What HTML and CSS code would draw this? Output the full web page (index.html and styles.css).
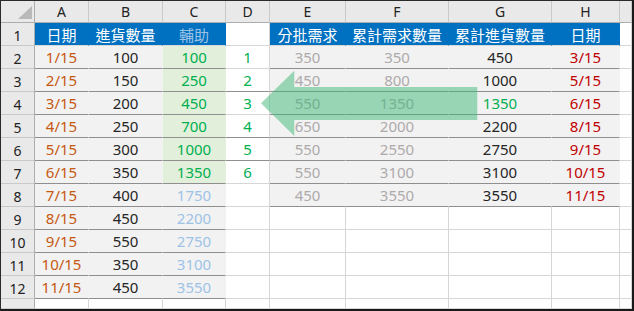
FILE: index.html
```html
<!DOCTYPE html>
<html lang="zh-Hant">
<head>
<meta charset="utf-8">
<title>Sheet</title>
<link rel="stylesheet" href="styles.css">
</head>
<body>
<div class="sheet">
  <div class="grid">
    <!-- column headers -->
    <div class="corner"><span class="tri"></span></div>
    <div class="ch">A</div><div class="ch">B</div><div class="ch">C</div><div class="ch">D</div>
    <div class="ch">E</div><div class="ch">F</div><div class="ch">G</div><div class="ch">H</div><div class="ch"></div>

    <!-- row 1 -->
    <div class="rh">1</div>
    <div class="c hd">日期</div><div class="c hd">進貨數量</div><div class="c hd hl">輔助</div>
    <div class="c"></div>
    <div class="c hd">分批需求</div><div class="c hd">累計需求數量</div><div class="c hd">累計進貨數量</div><div class="c hd">日期</div><div class="c"></div>

    <!-- row 2 -->
    <div class="rh">2</div>
    <div class="c t or">1/15</div><div class="c t bk">100</div><div class="c t g gr">100</div>
    <div class="c gr">1</div>
    <div class="c t gy">350</div><div class="c t gy">350</div><div class="c t bk">450</div><div class="c t rd">3/15</div><div class="c"></div>

    <!-- row 3 -->
    <div class="rh">3</div>
    <div class="c t or">2/15</div><div class="c t bk">150</div><div class="c t g gr">250</div>
    <div class="c dk gr">2</div>
    <div class="c t gy">450</div><div class="c t gy">800</div><div class="c t bk">1000</div><div class="c t rd">5/15</div><div class="c"></div>

    <!-- row 4 -->
    <div class="rh">4</div>
    <div class="c t or">3/15</div><div class="c t bk">200</div><div class="c t g gr">450</div>
    <div class="c gr">3</div>
    <div class="c t gy">550</div><div class="c t gy">1350</div><div class="c t gr">1350</div><div class="c t rd">6/15</div><div class="c"></div>

    <!-- row 5 -->
    <div class="rh">5</div>
    <div class="c t or">4/15</div><div class="c t bk">250</div><div class="c t g gr">700</div>
    <div class="c dk gr">4</div>
    <div class="c t gy">650</div><div class="c t gy">2000</div><div class="c t bk">2200</div><div class="c t rd">8/15</div><div class="c"></div>

    <!-- row 6 -->
    <div class="rh">6</div>
    <div class="c t or">5/15</div><div class="c t bk">300</div><div class="c t g gr">1000</div>
    <div class="c dk gr">5</div>
    <div class="c t gy">550</div><div class="c t gy">2550</div><div class="c t bk">2750</div><div class="c t rd">9/15</div><div class="c"></div>

    <!-- row 7 -->
    <div class="rh">7</div>
    <div class="c t or">6/15</div><div class="c t bk">350</div><div class="c t g gr">1350</div>
    <div class="c gr">6</div>
    <div class="c t gy">550</div><div class="c t gy">3100</div><div class="c t bk">3100</div><div class="c t rd">10/15</div><div class="c"></div>

    <!-- row 8 -->
    <div class="rh">8</div>
    <div class="c t or">7/15</div><div class="c t bk">400</div><div class="c t lb">1750</div>
    <div class="c"></div>
    <div class="c t gy">450</div><div class="c t gy">3550</div><div class="c t bk">3550</div><div class="c t rd">11/15</div><div class="c"></div>

    <!-- row 9 -->
    <div class="rh">9</div>
    <div class="c t or">8/15</div><div class="c t bk">450</div><div class="c t lb">2200</div>
    <div class="c"></div><div class="c"></div><div class="c"></div><div class="c"></div><div class="c"></div><div class="c"></div>

    <!-- row 10 -->
    <div class="rh">10</div>
    <div class="c t or">9/15</div><div class="c t bk">550</div><div class="c t lb">2750</div>
    <div class="c"></div><div class="c"></div><div class="c"></div><div class="c"></div><div class="c"></div><div class="c"></div>

    <!-- row 11 -->
    <div class="rh">11</div>
    <div class="c t or">10/15</div><div class="c t bk">350</div><div class="c t lb">3100</div>
    <div class="c"></div><div class="c"></div><div class="c"></div><div class="c"></div><div class="c"></div><div class="c"></div>

    <!-- row 12 -->
    <div class="rh">12</div>
    <div class="c t or">11/15</div><div class="c t bk">450</div><div class="c t lb">3550</div>
    <div class="c"></div><div class="c"></div><div class="c"></div><div class="c"></div><div class="c"></div><div class="c"></div>

    <!-- row 13 -->
    <div class="rh rh-cut">13</div>
    <div class="c"></div><div class="c"></div><div class="c"></div>
    <div class="c"></div><div class="c"></div><div class="c"></div><div class="c"></div><div class="c"></div><div class="c"></div>
  </div>

  <svg class="arrow" width="631" height="308" viewBox="0 0 631 308" aria-hidden="true">
    <polygon points="260,102.3 293.3,69.7 293.3,86 476.3,86 476.3,119 293.3,119 293.3,135" fill="#3cb878" fill-opacity="0.5"/>
  </svg>
</div>
</body>
</html>
```

FILE: styles.css
```css
html, body {
  margin: 0;
  padding: 0;
  background: #ffffff;
}

.sheet {
  position: relative;
  width: 634px;
  height: 311px;
  box-sizing: border-box;
  border-left: 1px solid #2b2b2b;
  border-top: 1px solid #2b2b2b;
  border-right: 2px solid #1a1a1a;
  border-bottom: 2px solid #1a1a1a;
  overflow: hidden;
  font-family: "Noto Sans", "Noto Sans CJK TC", sans-serif;
}

.grid {
  display: grid;
  grid-template-columns: 34px 54px 74px 63px 44px 76px 103px 103px 68px 1fr;
  grid-template-rows: 22px repeat(12, 23px) 1fr;
  height: 100%;
}

.grid > div {
  box-sizing: border-box;
  display: flex;
  align-items: center;
  justify-content: center;
  overflow: hidden;
  white-space: nowrap;
}

/* column headers */
.corner,
.ch {
  background: #e9e9e9;
  border-right: 1px solid #c9c9c9;
  border-bottom: 1px solid #adadad;
  font-size: 14px;
  color: #222222;
}

.corner {
  position: relative;
  border-right-color: #adadad;
}

.tri {
  position: absolute;
  right: 2px;
  bottom: 3px;
  width: 0;
  height: 0;
  border-left: 14px solid transparent;
  border-bottom: 13px solid #b9b9b9;
}

/* row headers */
.rh {
  background: #e9e9e9;
  border-right: 1px solid #adadad;
  border-bottom: 1px solid #c9c9c9;
  font-size: 14px;
  color: #222222;
  padding-top: 2px;
}

.rh-cut {
  align-items: flex-start !important;
  padding-top: 4px;
}

/* regular cells */
.c {
  background: #ffffff;
  border-right: 1px solid #d6d6d6;
  border-bottom: 1px solid #d6d6d6;
  font-size: 15px;
}

.c.hd {
  background: #0070c0;
  color: #ffffff;
  border-right-color: transparent;
  border-bottom-color: #d9d9d9;
}

.c.hd.hl {
  color: #9dc3e6;
}

.c.t {
  background: #f2f2f2;
  border-right-color: transparent;
  border-bottom-color: #8f8f8f;
}

.c.t.g {
  background: #e2efda;
}

.c.dk {
  border-bottom-color: #8f8f8f;
}

/* text colors */
.or { color: #c65911; }
.bk { color: #262626; }
.gr { color: #00b050; }
.lb { color: #9dc3e6; }
.gy { color: #aeaaaa; }
.rd { color: #c00000; }

.arrow {
  position: absolute;
  left: 0;
  top: 0;
  pointer-events: none;
}
```
